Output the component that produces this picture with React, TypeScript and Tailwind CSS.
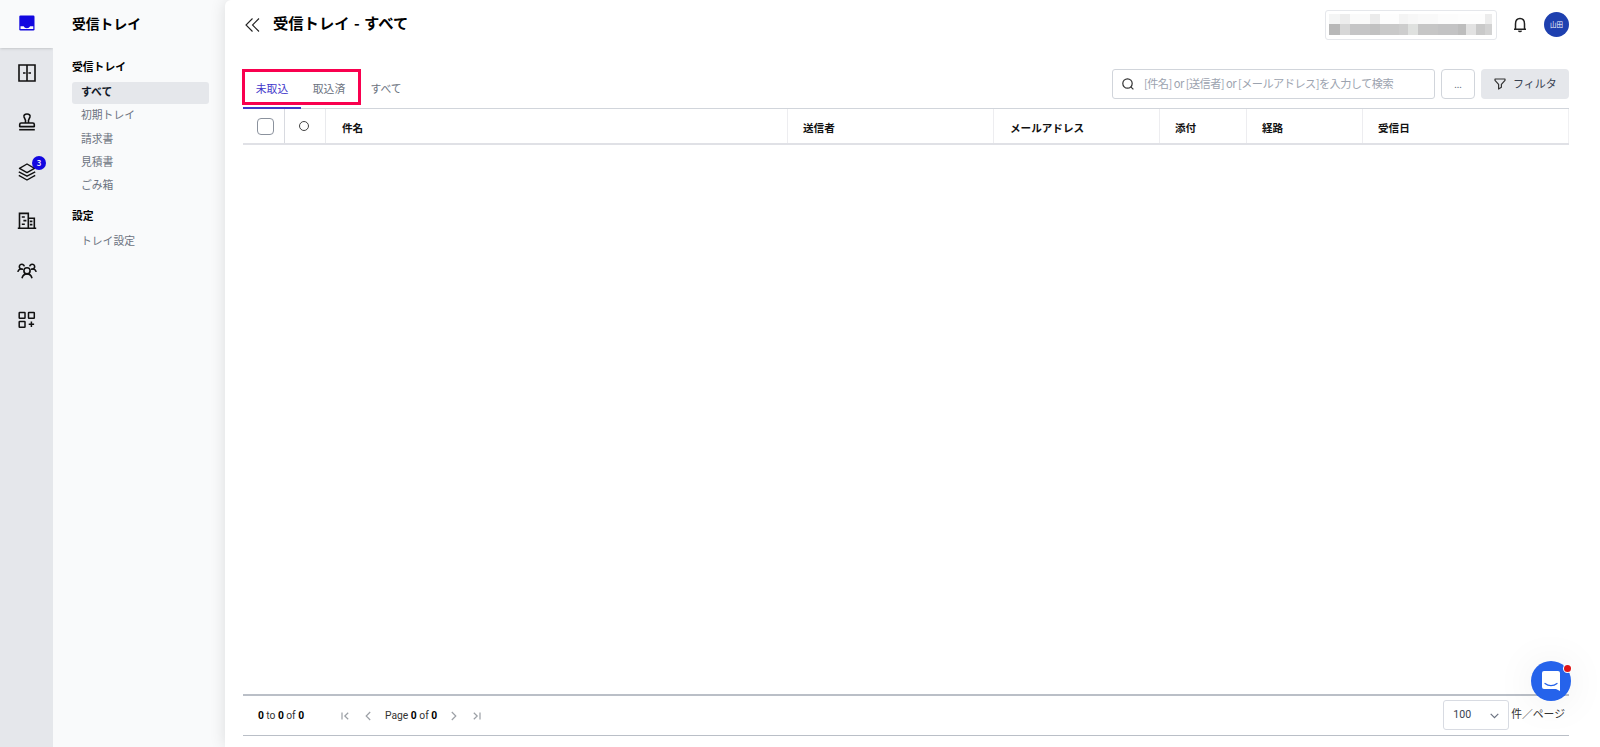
import React from "react";

type MenuItem = { label: string; active?: boolean };

const menu: MenuItem[] = [
  { label: "すべて", active: true },
  { label: "初期トレイ" },
  { label: "請求書" },
  { label: "見積書" },
  { label: "ごみ箱" },
];

const InboxIcon = () => (
  <svg width="16" height="16" viewBox="0 0 16 16" className="text-[#1207e0]">
    <rect x="0.3" y="0.5" width="15.2" height="15" rx="1.2" fill="currentColor" />
    <path d="M1.500 11.200h3.200c.6 1.300 1.700 2 3.200 2s2.600-.7 3.200-2h3.200v2.900H1.500z" fill="#f9fafb" />
  </svg>
);

const CabinetIcon = () => (
  <svg width="18" height="18" viewBox="0 0 18 18" fill="none" stroke="currentColor" strokeWidth="1.600">
    <path d="M1 1h16v16H1zM9 1v16" />
    <path d="M5 9h2.600M10.400 9H13" />
  </svg>
);

const StampIcon = () => (
  <svg width="18" height="18" viewBox="0 0 18 18" fill="none" stroke="currentColor" strokeWidth="1.600" strokeLinejoin="round">
    <path d="M7.500 10V7.300L6.100 4.100C5.500 2.300 6.700 1 9 1s3.500 1.300 2.900 3.100L10.500 7.300V10" />
    <path d="M3.200 10h11.600c1 0 1.500.5 1.500 1.400v2.200H1.700v-2.200c0-.9.5-1.400 1.500-1.400z" />
    <path d="M1.200 16.700h15.600" />
  </svg>
);

const LayersIcon = () => (
  <svg width="18" height="18" viewBox="0 0 18 18" fill="none" stroke="currentColor" strokeWidth="1.400" strokeLinejoin="round">
    <path d="M9 1l7.500 4.300L9 9.600 1.500 5.300z" />
    <path d="M.8 8.800L9 13.200l8.200-4.400M.8 12.400L9 17l8.200-4.600" />
  </svg>
);

const OfficeIcon = () => (
  <svg width="20" height="18" viewBox="0 0 20 18" fill="none" stroke="currentColor" strokeWidth="1.600">
    <path d="M2.500 16V1.400h8.800V16M11.300 6.300h6V16M.8 16.200h18.400" />
    <path d="M4.800 5h3M6.400 8.600h3M4.800 12.200h3M12.800 9.400h2.600M12.800 12.600h2.600" />
  </svg>
);

const PeopleIcon = () => (
  <svg width="20" height="16" viewBox="0 0 20 16" fill="none" stroke="currentColor" strokeWidth="1.600">
    <circle cx="10" cy="7.800" r="3.100" />
    <path d="M5 15.200c.7-2.700 2.600-4.300 5-4.300s4.300 1.600 5 4.300" />
    <path d="M7.300 3.300A2.500 2.500 0 1 0 3.600 5.900C2.200 6.300 1.100 7.400.8 8.900M12.700 3.300a2.500 2.500 0 1 1 3.700 2.600c1.400.4 2.500 1.500 2.800 3" />
    <path d="M3.500 5.800c.8.300 1.700.4 2.500.1M16.500 5.800c-.8.300-1.700.4-2.500.1" />
  </svg>
);

const AppsIcon = () => (
  <svg width="18" height="18" viewBox="0 0 18 18" fill="none" stroke="currentColor" strokeWidth="1.500">
    <rect x="1.200" y="1.400" width="5.800" height="5.800" rx=".5" />
    <rect x="10.500" y="1.400" width="5.800" height="5.800" rx=".5" />
    <rect x="1.200" y="10.400" width="5.800" height="5.800" rx=".5" />
    <path d="M13.400 10.600v5.400M10.700 13.300h5.400" />
  </svg>
);

const icons = [CabinetIcon, StampIcon, LayersIcon, OfficeIcon, PeopleIcon, AppsIcon];

const Rail = () => (
  <nav className="flex w-[53px] shrink-0 flex-col bg-[#e5e7eb] text-[#111]">
    <div className="flex h-12 items-center justify-center bg-[#f9fafb] pb-[2px] shadow-sm">
      <InboxIcon />
    </div>
    {icons.map((Icon, i) => (
      <div key={i} className="relative flex h-[49.5px] items-center justify-center">
        <Icon />
        {Icon === LayersIcon && (
          <span className="absolute left-8 top-[9px] flex h-[14px] w-[14px] items-center justify-center rounded-full bg-[#1207e0] text-[8px] font-medium text-white">
            3
          </span>
        )}
      </div>
    ))}
  </nav>
);

const Sidebar = () => (
  <aside className="flex w-[172px] shrink-0 flex-col bg-[#f9fafb] pl-[19px] pr-4 text-[10.8px]">
    <h1 className="flex h-12 items-center text-[13.8px] font-bold text-black">受信トレイ</h1>
    <h2 className="mt-2 flex h-[22px] items-center pb-px font-bold text-black">受信トレイ</h2>
    <ul className="mt-1">
      {menu.map((item) => (
        <li
          key={item.label}
          className={
            item.active
              ? "flex h-[22px] items-center rounded-[3px] bg-[#e5e7eb] pb-[3px] pl-[9px] font-bold text-[#111827]"
              : "flex h-[23.3px] items-center pb-[2px] pl-[9px] text-[#6b7280]"
          }
        >
          {item.label}
        </li>
      ))}
    </ul>
    <h2 className="mt-2 flex h-[22px] items-center pb-px font-bold text-black">設定</h2>
    <div className="mt-[2px] flex h-[23px] items-center pl-[9px] text-[#6b7280]">トレイ設定</div>
  </aside>
);

// masked tenant name, one entry per cell: width, upper tone, lower tone
const mosaic: [number, string, string][] = [
  [11, "#f4f5f5", "#b8b8b8"],
  [10, "#ededed", "#d7d7d7"],
  [20, "#fafafa", "#c5c5c6"],
  [10, "#ebebeb", "#c1c1c1"],
  [19, "#fdfdfd", "#c9c9c9"],
  [9, "#f4f4f4", "#cdcdcd"],
  [10, "#f7f7f7", "#dfe1df"],
  [20, "#f9f9f9", "#c6c6c6"],
  [20, "#fcfcfc", "#c3c3c4"],
  [8, "#fdfdfd", "#bdbdbd"],
  [10, "#fdfdfd", "#e2e2e2"],
  [9, "#fdfdfd", "#c9c9c9"],
  [7, "#ececec", "#d2d2d2"],
];

const TopBar = () => (
  <header className="flex h-[49px] items-center pl-[20px] pr-[31px]">
    <svg width="15" height="14" viewBox="0 0 15 14" fill="none" stroke="#222" strokeWidth="1.100">
      <path d="M7.500.5L1 7l6.500 6.500M14 .5L7.500 7l6.500 6.500" />
    </svg>
    <h1 className="ml-[13px] pb-1 text-[15.3px] font-bold text-black [word-spacing:1px]">受信トレイ - すべて</h1>
    <div className="ml-auto flex h-[30px] w-[172px] items-center overflow-hidden rounded-[3px] border-[1.5px] border-[#e5e7eb] pl-[3px]">
      {mosaic.map(([w, top, bottom], i) => (
        <div key={i} className="flex shrink-0 flex-col" style={{ width: w }}>
          <span className="h-[10px]" style={{ background: top }} />
          <span className="h-[11px]" style={{ background: bottom }} />
        </div>
      ))}
    </div>
    <svg className="ml-4 mt-px" width="14" height="16" viewBox="0 0 14 16" fill="none" stroke="#222" strokeWidth="1.500">
      <path d="M1 12.300h12M2.500 12V7C2.500 3.500 4.300 1.600 7 1.600S11.500 3.500 11.500 7v5" />
      <path d="M5.600 13.600c.2.700.7 1 1.400 1s1.200-.3 1.400-1" />
    </svg>
    <div className="ml-[17px] flex h-[25px] w-[25px] items-center justify-center rounded-full bg-[#1e40af] pb-px text-[6.5px] text-white">
      山田
    </div>
  </header>
);

const Toolbar = () => (
  <div className="flex h-[60px] border-b border-[#d1d5db] text-[10.8px]">
    <div className="relative flex">
      <div className="relative flex w-[58px] items-center justify-center pt-5 text-[#4338ca]">
        未取込
        <span className="absolute bottom-[-1px] left-0 h-[2px] w-full bg-[#4338ca]" />
      </div>
      <div className="flex w-[56px] items-center justify-center pt-5 text-[#6b7280]">取込済</div>
      <div className="flex w-[58px] items-center justify-center pt-5 text-[#6b7280]">すべて</div>
      <div className="absolute left-[-1px] top-5 h-[36px] w-[119px] border-[3px] border-[#f9004f]" />
    </div>
    <div className="ml-auto flex gap-[6px] pt-5">
      <div className="flex h-[30px] w-[323px] items-center rounded-[3px] border border-[#d1d5db] pb-px pl-[9px] text-[11.2px] text-[#9ca3af]">
        <svg className="mr-[10px]" width="12" height="12" viewBox="0 0 12 12" fill="none" stroke="#333" strokeWidth="1.200">
          <circle cx="5.500" cy="5.500" r="4.700" />
          <path d="M8.800 8.800l2.600 2.600" />
        </svg>
        <span className="whitespace-nowrap tracking-[-0.55px]">[件名] or [送信者] or [メールアドレス]を入力して検索</span>
      </div>
      <div className="flex h-[30px] w-[34px] items-center justify-center rounded-[4px] border border-[#d1d5db] text-[9px] text-[#6b7280]">
        ...
      </div>
      <div className="flex h-[30px] w-[88px] items-center rounded-[4px] bg-[#e5e7eb] pb-px pl-[13px] text-[11px] text-[#374151]">
        <svg className="mr-[7px] mt-px" width="12" height="12" viewBox="0 0 12 12" fill="none" stroke="#333" strokeWidth="1.200" strokeLinejoin="round">
          <path d="M1 1h10v1.300L7.400 6.300v3L4.600 11V6.300L1 2.300z" />
        </svg>
        フィルタ
      </div>
    </div>
  </div>
);

const Grid = () => (
  <div className="flex h-[36px] items-stretch border-b-2 border-[#e0e1e6] text-[10.6px] font-bold text-[#111]">
    <div className="flex w-[42px] items-center border-r border-[#d8dae0] pl-[14px]">
      <span className="mt-px h-[17px] w-[17px] rounded-[4px] border border-[#8b929d]" />
    </div>
    <div className="flex w-[41px] items-center border-r border-[#e9eaed] pl-[14px]">
      <span className="h-[10px] w-[10px] rounded-full border border-[#444]" />
    </div>
    <div className="flex w-[462px] items-center border-r border-[#ededf0] pl-4 pt-1">件名</div>
    <div className="flex w-[206px] items-center border-r border-[#ededf0] pl-[15px] pt-1">送信者</div>
    <div className="flex w-[166px] items-center border-r border-[#ededf0] pl-4 pt-1">メールアドレス</div>
    <div className="flex w-[87px] items-center border-r border-[#ededf0] pl-[15px] pt-1">添付</div>
    <div className="flex w-[116px] items-center border-r border-[#ededf0] pl-[15px] pt-1">経路</div>
    <div className="flex flex-1 items-center border-r border-[#f0f0f2] pl-[15px] pt-1">受信日</div>
  </div>
);

const Pager = () => (
  <footer className="mt-auto mb-[11px] flex h-[42px] items-center border-t-2 border-b border-t-[#babfc7] border-b-[#babfc7] pl-[15px] font-[Roboto,'Noto_Sans_CJK_JP',sans-serif] text-[10.3px] text-[#333]">
    <span className="w-[83px] whitespace-nowrap pt-[2px] tracking-[-0.05px]">
      <b className="text-black">0</b> to <b className="text-black">0</b> of <b className="text-black">0</b>
    </span>
    <svg width="8" height="8" viewBox="0 0 8 8" fill="none" stroke="#9ca0a6" strokeWidth="1.200">
      <path d="M1 .5v7M7.200.7L3.800 4l3.400 3.300" />
    </svg>
    <svg className="ml-4" width="6" height="10" viewBox="0 0 6 10" fill="none" stroke="#9ca0a6" strokeWidth="1.200">
      <path d="M5.200 1L1.200 5l4 4" />
    </svg>
    <span className="ml-[14px] w-[53px] whitespace-nowrap pt-[2px]">
      Page <b className="text-black">0</b> of <b className="text-black">0</b>
    </span>
    <svg className="ml-[13px]" width="6" height="10" viewBox="0 0 6 10" fill="none" stroke="#9ca0a6" strokeWidth="1.200">
      <path d="M.8 1l4 4-4 4" />
    </svg>
    <svg className="ml-4" width="8" height="8" viewBox="0 0 8 8" fill="none" stroke="#9ca0a6" strokeWidth="1.200">
      <path d="M7 .5v7M.8.7L4.200 4 .8 7.300" />
    </svg>
    <div className="mb-px ml-auto flex h-[30px] w-[66px] items-center justify-between rounded-[3px] border border-[#d8dbe2] px-[9px] pt-px text-[10.6px] text-[#374151]">
      100
      <svg width="9" height="6" viewBox="0 0 9 6" fill="none" stroke="#6b7280" strokeWidth="1.200">
        <path d="M.7.8L4.500 4.600 8.300.8" />
      </svg>
    </div>
    <span className="ml-[2px] mr-1 text-[10.8px]">件／ページ</span>
  </footer>
);

const Chat = () => (
  <div className="absolute bottom-[46px] right-[29px] flex h-10 w-10 items-center justify-center rounded-full bg-[#2563eb] shadow-[0_2px_40px_rgba(0,0,0,0.08)]">
    <svg width="18" height="20" viewBox="0 0 18 20">
      <path d="M2 0h14a2 2 0 0 1 2 2v18l-4-2H2a2 2 0 0 1-2-2V2a2 2 0 0 1 2-2z" fill="#fff" />
      <path d="M3 12.500c3.500 2.900 8.500 2.900 12 0" fill="none" stroke="#2563eb" strokeWidth="1.200" strokeLinecap="round" />
    </svg>
    <span className="absolute right-0 top-1 h-[7px] w-[7px] rounded-full bg-[#e01515] ring-1 ring-white" />
  </div>
);

const App = () => {
  return (
    <div className="relative flex h-[747px] w-full overflow-hidden bg-[#f9fafb] font-['Noto_Sans_CJK_JP',sans-serif] leading-none">
      <Rail />
      <Sidebar />
      <main className="flex min-w-0 flex-1 flex-col rounded-tl-[6px] bg-white shadow-[0_0_16px_rgba(0,0,0,0.12)]">
        <TopBar />
        <div className="ml-[18px] mr-[31px] flex flex-1 flex-col">
          <Toolbar />
          <Grid />
          <Pager />
        </div>
      </main>
      <Chat />
    </div>
  );
};

export default App;
